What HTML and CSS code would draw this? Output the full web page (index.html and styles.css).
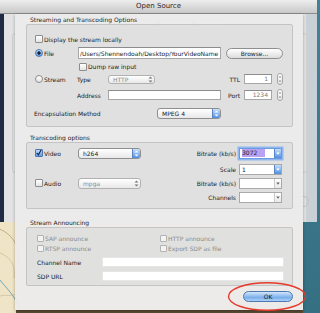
FILE: index.html
```html
<!DOCTYPE html>
<html lang="en">
<head>
  <meta charset="UTF-8" />
  <title>Open Source</title>
  <link rel="stylesheet" href="styles.css">
</head>
<body>
<div class="desktop">

  <div class="backwin">
    <div class="titlebar">Open Source</div>
    <div class="tabs">
      <span></span><span></span><span></span><span></span>
    </div>
    <div class="tabpanel"></div>
    <div class="ghost-buttons">
      <span class="gbtn"></span><span class="gbtn"></span>
    </div>
  </div>

  <div class="wallpaper">
    <svg width="303" height="91" viewBox="0 0 303 91">
      <path d="M-4 6 C 12 10, 22 26, 18 44" fill="none" stroke="#a98a63" stroke-width="1" opacity="0.6"/>
      <path d="M-2 30 C 8 34, 16 40, 14 56" fill="none" stroke="#b39a75" stroke-width="0.8" opacity="0.5"/>
      <path d="M0 58 C 6 66, 12 70, 20 86" fill="none" stroke="#4f97b7" stroke-width="1" opacity="0.8"/>
      <path d="M0 74 C 6 72, 12 76, 18 70" fill="none" stroke="#b8a07c" stroke-width="0.8" opacity="0.5"/>
    </svg>
    <div class="dock"></div>
  </div>

  <div class="sheet">
    <div class="group-title">Streaming and Transcoding Options</div>
    <div class="box box-stream">
      <div class="row r1">
        <span class="check"></span><span>Display the stream locally</span>
      </div>
      <div class="row r2">
        <span class="radio on"></span><span class="lead">File</span>
        <span class="field path">/Users/Shennendoah/Desktop/YourVideoName</span>
        <span class="btn browse">Browse...</span>
      </div>
      <div class="row r3">
        <span class="check dump"></span><span>Dump raw input</span>
      </div>
      <div class="row r4">
        <span class="radio"></span><span class="lead">Stream</span>
        <span class="sub">Type</span>
        <span class="popup off type">HTTP
          <span class="arr"><svg width="7" height="9" viewBox="0 0 7 9"><path d="M1.5 3.6 L3.5 1.6 L5.5 3.6Z M1.5 5.4 L3.5 7.4 L5.5 5.4Z"/></svg></span>
        </span>
        <span class="rlabel ttl">TTL</span>
        <span class="field num">1</span>
        <span class="stepper"><svg width="6" height="12" viewBox="0 0 6 12"><path d="M1.5 4.5 L3 3 L4.5 4.5Z M1.5 7.5 L3 9 L4.5 7.5Z"/></svg></span>
      </div>
      <div class="row r5">
        <span class="sub indent">Address</span>
        <span class="field addr"></span>
        <span class="rlabel port">Port</span>
        <span class="field num">1234</span>
        <span class="stepper"><svg width="6" height="12" viewBox="0 0 6 12"><path d="M1.5 4.5 L3 3 L4.5 4.5Z M1.5 7.5 L3 9 L4.5 7.5Z"/></svg></span>
      </div>
      <div class="row r6">
        <span class="encap">Encapsulation Method</span>
        <span class="popup mpeg">MPEG 4
          <span class="arr"><svg width="7" height="11" viewBox="0 0 7 11"><path d="M1.5 4.5 L3.5 2.5 L5.5 4.5Z M1.5 6.5 L3.5 8.5 L5.5 6.5Z"/></svg></span>
        </span>
      </div>
    </div>

    <div class="group-title second">Transcoding options</div>
    <div class="box box-trans">
      <div class="row">
        <span class="check on"><svg width="6" height="6" viewBox="0 0 6 6"><path d="M0.8 3 L2.4 4.8 L5.6 -0.8" fill="none" stroke="#16223a" stroke-width="1.1"/></svg></span>
        <span class="lead">Video</span>
        <span class="popup codec">h264
          <span class="arr"><svg width="7" height="11" viewBox="0 0 7 11"><path d="M1.5 4.5 L3.5 2.5 L5.5 4.5Z M1.5 6.5 L3.5 8.5 L5.5 6.5Z"/></svg></span>
        </span>
        <span class="rlabel wide">Bitrate (kb/s)</span>
        <span class="combo focus"><span class="sel">3072</span>
          <span class="darr"><svg width="6" height="9" viewBox="0 0 6 9"><path d="M1.2 3.6 L4.8 3.6 L3 5.8Z"/></svg></span>
        </span>
      </div>
      <div class="row gap2">
        <span class="rlabel wide skip">Scale</span>
        <span class="combo active"><span>1</span>
          <span class="darr"><svg width="6" height="9" viewBox="0 0 6 9"><path d="M1.2 3.6 L4.8 3.6 L3 5.8Z"/></svg></span>
        </span>
      </div>
      <div class="row">
        <span class="check"></span>
        <span class="lead">Audio</span>
        <span class="popup off codec">mpga
          <span class="arr"><svg width="7" height="11" viewBox="0 0 7 11"><path d="M1.5 4.5 L3.5 2.5 L5.5 4.5Z M1.5 6.5 L3.5 8.5 L5.5 6.5Z"/></svg></span>
        </span>
        <span class="rlabel wide">Bitrate (kb/s)</span>
        <span class="combo"><span></span>
          <span class="darr"><svg width="6" height="9" viewBox="0 0 6 9"><path d="M1.2 3.6 L4.8 3.6 L3 5.8Z"/></svg></span>
        </span>
      </div>
      <div class="row">
        <span class="rlabel wide skip">Channels</span>
        <span class="combo"><span></span>
          <span class="darr"><svg width="6" height="9" viewBox="0 0 6 9"><path d="M1.2 3.6 L4.8 3.6 L3 5.8Z"/></svg></span>
        </span>
      </div>
    </div>

    <div class="group-title third">Stream Announcing</div>
    <div class="box box-announce">
      <div class="row small">
        <span class="opt"><span class="check dis"></span>SAP announce</span>
        <span class="opt"><span class="check dis"></span>HTTP announce</span>
      </div>
      <div class="row small">
        <span class="opt"><span class="check dis"></span>RTSP announce</span>
        <span class="opt"><span class="check dis"></span>Export SDP as file</span>
      </div>
      <div class="row entry first">
        <span class="elabel">Channel Name</span>
        <span class="field long"></span>
      </div>
      <div class="row entry">
        <span class="elabel">SDP URL</span>
        <span class="field long"></span>
      </div>
    </div>

    <div class="actions">
      <span class="btn ok">OK</span>
    </div>
  </div>

  <svg class="circle" width="82" height="32" viewBox="0 0 82 32">
    <ellipse cx="40" cy="15.5" rx="38.5" ry="13.8" fill="none" stroke="#e63b2c" stroke-width="1.4"/>
  </svg>

</div>
</body>
</html>
```

FILE: styles.css
```css
* {
  box-sizing: border-box;
}

body {
  margin: 0;
  font-family: "DejaVu Sans", sans-serif;
  font-size: 6px;
  color: #1a1a1a;
}

.desktop {
  position: relative;
  width: 320px;
  height: 313px;
  overflow: hidden;
  background: linear-gradient(#3f8398, #356f82);
}

.backwin {
  position: absolute;
  left: 0;
  top: 0;
  width: 317px;
  height: 222px;
  background: linear-gradient(to right, #1f2c44 0 4px, #e3e3e3 4px 306px, #c9d0d6 306px);
}

.titlebar {
  height: 14px;
  background: linear-gradient(#ededed, #c9c9c9);
  border-bottom: 1px solid #8c8c8c;
  text-align: center;
  font-size: 7px;
  line-height: 13px;
  color: #2b2b2b;
}

/* faint outlines of the window behind the sheet */
.tabs {
  display: flex;
  justify-content: center;
  margin-top: 6px;
  height: 11px;
}

.tabs span {
  width: 34px;
  border: 1px solid #c4c4c4;
}

.tabpanel {
  margin: 2px 10px 0 12px;
  height: 140px;
  border: 1px solid #cfcfcf;
  border-radius: 3px;
}

.ghost-buttons {
  display: flex;
  justify-content: flex-end;
  gap: 14px;
  margin: 23px 8px 0 0;
}

.gbtn {
  width: 50px;
  height: 11px;
  border: 1px solid #c2c2c2;
  border-radius: 6px;
}

.wallpaper {
  position: absolute;
  left: 0;
  top: 222px;
  width: 303px;
  height: 91px;
  background: #efe4c6;
}

.wallpaper svg {
  display: block;
}

.dock {
  position: absolute;
  left: 16px;
  right: 0;
  bottom: 0;
  height: 3px;
  background: #5b4b35;
}

/* the sheet */
.sheet {
  position: absolute;
  left: 15px;
  top: 14px;
  width: 288px;
  height: 296px;
  padding: 1px 10px 0 11px;
  background: rgba(236, 236, 236, 0.93);
  box-shadow: 0 1px 3px rgba(0, 0, 0, 0.3);
}

.group-title {
  height: 9px;
  line-height: 9px;
  padding-left: 4px;
  color: #222;
}

.group-title.second {
  margin-top: 6px;
}

.group-title.third {
  margin-top: 9px;
}

.box {
  border: 1px solid #c4c4c4;
  border-radius: 2px;
  background: rgba(215, 215, 215, 0.55);
}

.box-stream {
  padding: 7px 8px 5px 8px;
}

.box-trans {
  padding: 3px 8px 4px 8px;
}

.box-announce {
  padding: 5px 8px 3px 10px;
}

.row {
  display: flex;
  align-items: center;
  height: 14px;
  white-space: nowrap;
}

.r3 { height: 13px; }
.r4 { height: 12px; }
.r5 { height: 20px; }
.r6 { height: 16px; }

.gap2 {
  margin-top: 2px;
}

/* checkboxes and radios */
.check, .radio {
  flex: none;
  width: 8px;
  height: 8px;
  margin-right: 1px;
  border: 1px solid #8d8d8d;
  border-radius: 1px;
  background: linear-gradient(#ffffff, #e4e4e4);
  display: flex;
  align-items: center;
  justify-content: center;
}

.radio {
  border-radius: 50%;
}

.radio.on {
  border-color: #4b76b2;
  background: radial-gradient(circle, #15223a 0 1.4px, transparent 1.9px), linear-gradient(#c2dcfa, #5c9be6);
}

.check.on {
  border-color: #4b76b2;
  background: linear-gradient(#c2dcfa, #5c9be6);
}

.check.dump {
  margin-left: 44px;
}

.check.dis {
  width: 7px;
  height: 7px;
  border-color: #b2b2b2;
  background: #f3f3f3;
}

.lead {
  width: 33px;
  flex: none;
}

.box-trans .lead {
  width: 34px;
}

.sub {
  width: 31px;
  flex: none;
}

.sub.indent {
  margin-left: 42px;
}

.rlabel {
  flex: none;
  text-align: right;
  padding-right: 4px;
}

.rlabel.ttl {
  width: 89px;
}

.rlabel.port {
  width: 23px;
}

.rlabel.wide {
  width: 98px;
  padding-right: 3px;
}

.rlabel.skip {
  margin-left: 106px;
}

.encap {
  width: 123px;
  margin-left: -1px;
  flex: none;
}

/* text fields */
.field {
  flex: none;
  background: #fff;
  border: 1px solid #a7a7a7;
  border-top-color: #8c8c8c;
  line-height: 8px;
}

.field.path {
  width: 143px;
  height: 12px;
  margin-left: 1px;
  padding: 1px 0 0 1px;
  line-height: 9px;
  color: #222;
}

.field.num {
  width: 28px;
  height: 10px;
  padding-right: 3px;
  text-align: right;
  color: #7a7a7a;
}

.field.addr {
  width: 113px;
  height: 10px;
}

.field.long {
  width: 182px;
  height: 10px;
  border-color: #e6e6e6;
}

/* buttons */
.btn {
  flex: none;
  display: flex;
  align-items: center;
  justify-content: center;
  border: 1px solid #8e8e8e;
  border-radius: 6px;
  background: linear-gradient(#ffffff, #dcdcdc);
}

.browse {
  width: 57px;
  height: 11px;
  margin-left: 5px;
}

.actions {
  display: flex;
  justify-content: flex-end;
  margin-top: 5px;
}

.ok {
  width: 50px;
  height: 11px;
  border-color: #4f78b0;
  background: linear-gradient(#d2e6fb, #8ab9ee 50%, #6fa6e8 51%, #a9d0f7);
  color: #1a1a1a;
}

/* popups */
.popup {
  flex: none;
  display: flex;
  align-items: center;
  padding-left: 4px;
  border: 1px solid #8f8f8f;
  border-radius: 3px;
  background: linear-gradient(#ffffff, #e8e8e8);
  overflow: hidden;
}

.popup .arr {
  margin-left: auto;
  width: 8px;
  height: 100%;
  display: flex;
  align-items: center;
  justify-content: center;
  background: linear-gradient(#c6def9, #4f8fe2);
  border-left: 1px solid #5b85c0;
}

.popup .arr svg {
  fill: #ffffff;
}

.popup.off {
  color: #8a8a8a;
  border-color: #b1b1b1;
}

.popup.off .arr {
  background: none;
  border-left: none;
}

.popup.off .arr svg {
  fill: #777;
}

.popup.type {
  width: 47px;
  height: 9px;
}

.popup.mpeg {
  width: 64px;
  height: 11px;
}

.popup.codec {
  width: 63px;
  height: 11px;
}

/* combo boxes */
.combo {
  flex: none;
  display: flex;
  align-items: center;
  width: 43px;
  height: 11px;
  padding-left: 2px;
  background: #fff;
  border: 1px solid #a9a9a9;
}

.combo .darr {
  margin-left: auto;
  width: 7px;
  height: 100%;
  display: flex;
  align-items: center;
  justify-content: center;
  border-left: 1px solid #c9c9c9;
  background: linear-gradient(#ffffff, #e9e9e9);
}

.combo .darr svg {
  fill: #666;
}

.combo.active .darr, .combo.focus .darr {
  background: linear-gradient(#c6def9, #4f8fe2);
  border-left-color: #5b85c0;
}

.combo.active .darr svg, .combo.focus .darr svg {
  fill: #fff;
}

.combo.focus {
  border-color: #6b9ae0;
  box-shadow: 0 0 0 1.5px #8fb6ee;
}

.sel {
  background: #b9a2f3;
  line-height: 8px;
  padding-right: 8px;
}

.stepper {
  flex: none;
  width: 6px;
  height: 12px;
  margin-left: 5px;
  border: 1px solid #a6a6a6;
  border-radius: 3px;
  background: linear-gradient(#ffffff, #e6e6e6);
  display: flex;
  align-items: center;
  justify-content: center;
}

.stepper svg {
  fill: #8a8a8a;
  flex: none;
}

/* announcing */
.row.small {
  height: 10px;
}

.opt {
  display: flex;
  align-items: center;
  width: 123px;
  color: #8b8b8b;
}

.row.entry {
  height: 12px;
  margin-top: 2px;
}

.row.entry.first {
  margin-top: 3px;
}

.elabel {
  width: 65px;
  flex: none;
}

.circle {
  position: absolute;
  left: 227px;
  top: 281px;
}
```
